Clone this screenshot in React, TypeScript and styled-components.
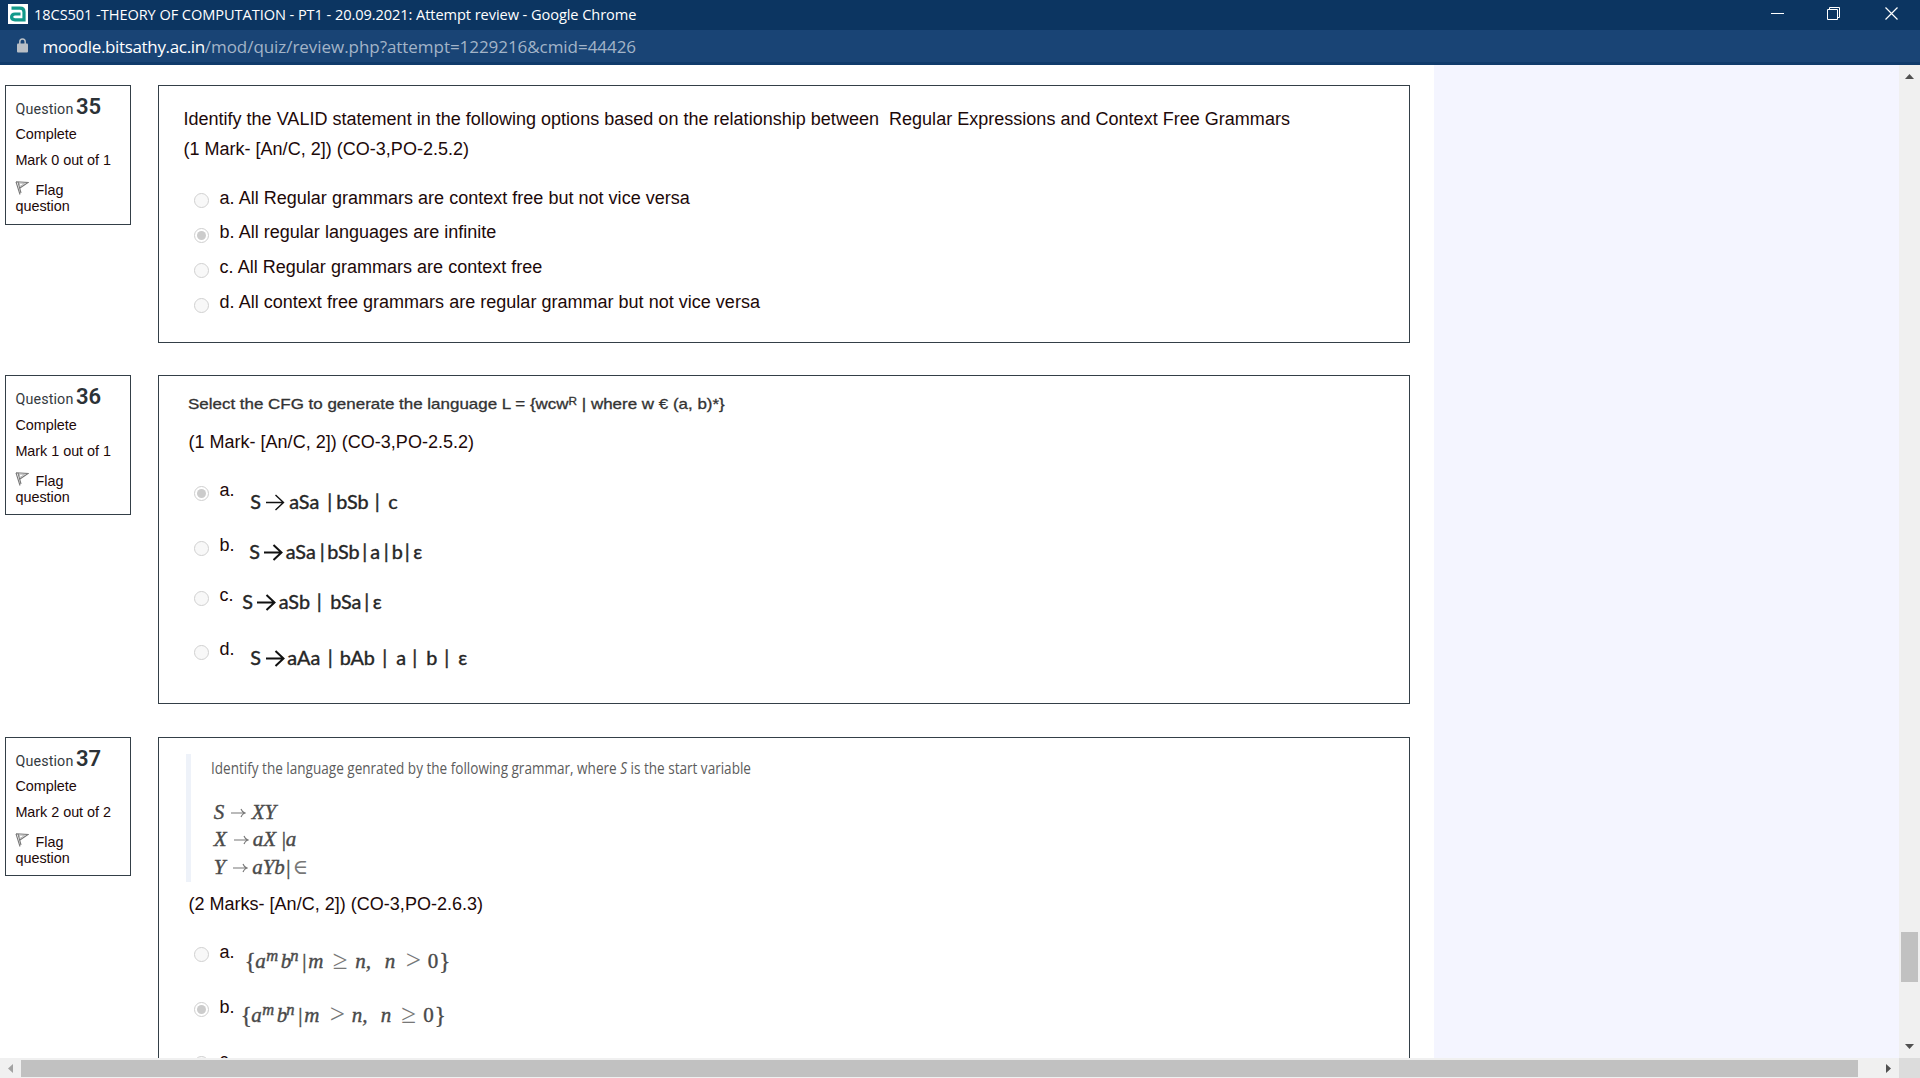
import React from "react";
import styled, { createGlobalStyle } from "styled-components";

const Global = createGlobalStyle`
  * { box-sizing: border-box; }
  html, body { margin: 0; padding: 0; overflow: hidden; background: #fff; }
  body { font-family: "Liberation Sans", Arial, sans-serif; }
`;

const SANS = '"Liberation Sans", Arial, sans-serif';
const UI = '"Open Sans", "Noto Sans", sans-serif';

const Window = styled.div`
  width: 1920px;
  height: 1078px;
  display: flex;
  flex-direction: column;
  overflow: hidden;
`;

const TitleBar = styled.header`
  height: 30px;
  flex: none;
  display: flex;
  align-items: center;
  padding: 0 22px 2px 8px;
  background: #0c3561;
  color: #fff;
  font: 14.6px/28px ${UI};
`;

const Title = styled.span`
  margin-left: 6px;
  white-space: pre;
  letter-spacing: -0.075px;
`;

const Controls = styled.div`
  margin-left: auto;
  display: flex;
  gap: 43px;
  padding-bottom: 1px;
  svg { display: block; }
  svg:last-child { margin-left: 2px; }
`;

const AddressBar = styled.div`
  height: 35px;
  flex: none;
  display: flex;
  align-items: center;
  padding: 0 0 1px 16px;
  background: #194475;
  border-bottom: 3px solid #103b6b;
  color: #a3b4c8;
  font: 17px/32px ${UI};
`;

const Url = styled.span`
  margin: 2px 0 0 13.5px;
  white-space: pre;
  letter-spacing: -0.05px;
  b { font-weight: 400; color: #fff; letter-spacing: -0.34px; }
`;

const Viewport = styled.div`
  height: 993px;
  flex: none;
  display: flex;
`;

const Content = styled.main`
  width: 1434px;
  height: 993px;
  overflow: hidden;
  padding: 20px 0 0 5px;
  background: #fff;
`;

const SidePanel = styled.aside`
  flex: 1;
  background: #f4f5ff;
`;

const VTrack = styled.div`
  width: 21px;
  display: flex;
  flex-direction: column;
  align-items: center;
  background: #f0f0f0;
  padding: 9px 0 9px;
  svg { display: block; flex: none; }
`;

const VThumb = styled.div`
  width: 17px;
  height: 50px;
  margin: 853px 0 auto;
  background: #c1c1c1;
`;

const HTrack = styled.div`
  height: 20px;
  flex: none;
  display: flex;
  background: #f0f0f0;
`;

const HArrow = styled.div<{ $end?: boolean }>`
  width: 21px;
  flex: none;
  margin-left: ${(p) => (p.$end ? "auto" : 0)};
  display: flex;
  align-items: center;
  justify-content: center;
`;

const HThumb = styled.div`
  width: 1837px;
  flex: none;
  height: 17px;
  margin-top: 2px;
  background: #c1c1c1;
`;

const Corner = styled.div`
  width: 21px;
  flex: none;
  background: #dcdcdc;
`;

const QuestionRow = styled.section<{ $h: number; $gap: number }>`
  display: flex;
  align-items: flex-start;
  height: ${(p) => p.$h}px;
  margin-bottom: ${(p) => p.$gap}px;
`;

const InfoBox = styled.div<{ $h: number }>`
  width: 126px;
  height: ${(p) => p.$h}px;
  flex: none;
  border: 1px solid #343f47;
  padding: 8px 0 0 9.4px;
  color: #1d0909;
  font: 14.4px/16px ${SANS};
`;

const InfoHead = styled.h3<{ $h: number }>`
  margin: 0;
  height: ${(p) => p.$h}px;
  font: 400 14.3px/25px Roboto, sans-serif;
  letter-spacing: 0.15px;
  word-spacing: -1.2px;
  color: #343a40;
  white-space: pre;
  b { font-size: 22px; font-weight: 600; letter-spacing: 0; color: #2c3237; }
`;

const InfoLine = styled.div`
  height: 26px;
  line-height: 26px;
  white-space: pre;
  letter-spacing: -0.03px;
`;

const FlagLabel = styled.div`
  margin-top: 8px;
  line-height: 16px;
  svg { margin-right: 6px; vertical-align: 0; }
`;

const Body = styled.div<{ $pt: number; $pl: number }>`
  width: 1252px;
  height: 100%;
  flex: none;
  margin-left: 27px;
  border: 1px solid #343f47;
  padding: ${(p) => p.$pt}px 0 0 ${(p) => p.$pl}px;
  color: #1d0909;
  font: 18px/30px ${SANS};
`;

const Para = styled.p<{ $mt?: number }>`
  margin: ${(p) => p.$mt || 0}px 0 0;
  height: 30px;
  white-space: pre;
  letter-spacing: 0.017px;
`;

const WideLine = styled.p`
  margin: 0;
  height: 20px;
  font: 14.4px/22px ${SANS};
  color: #333;
  -webkit-text-stroke: 0.3px #333;
  white-space: pre;
  width: max-content;
  transform-origin: 0 50%;
  transform: scaleX(1.178);
  sup { font-size: 10px; line-height: 0; vertical-align: 4px; }
`;

const Answers = styled.div<{ $mt: number; $ml: number }>`
  margin: ${(p) => p.$mt}px 0 0 ${(p) => p.$ml}px;
`;

const Answer = styled.div<{ $h: number }>`
  display: flex;
  align-items: flex-start;
  height: ${(p) => p.$h}px;
`;

const Radio = styled.span<{ $on?: boolean; $h: number }>`
  width: 15px;
  height: 15px;
  flex: none;
  margin: ${(p) => (p.$h - 15) / 2}px 10.6px 0 0.6px;
  border: 1px solid #cfcfcf;
  border-radius: 50%;
  background: ${(p) => (p.$on ? "#cccccc" : "#f8f8f8")};
  background-clip: content-box;
  padding: ${(p) => (p.$on ? 2 : 0)}px;
`;

const Label = styled.span<{ $lh: number; $w?: number }>`
  flex: none;
  width: ${(p) => (p.$w ? p.$w + "px" : "auto")};
  line-height: ${(p) => p.$lh}px;
  letter-spacing: 0.017px;
  white-space: pre;
`;

const Formula = styled.span<{ $lh: number; $math?: boolean }>`
  display: flex;
  flex: none;
  margin-left: 0.6px;
  line-height: ${(p) => p.$lh}px;
  white-space: pre;
  font-family: ${(p) => (p.$math ? '"Liberation Serif", "DejaVu Serif", serif' : 'Lato, "Liberation Sans", sans-serif')};
  font-size: ${(p) => (p.$math ? 21 : 19.8)}px;
  color: ${(p) => (p.$math ? "#4a4a4a" : "#262626")};
  -webkit-text-stroke: 0.3px currentColor;
`;

const Tok = styled.span<{ $w: number; $kind?: string }>`
  display: block;
  flex: none;
  width: ${(p) => p.$w}px;
  font-style: ${(p) => (p.$kind === "i" || p.$kind === "sup" ? "italic" : "normal")};
  font-size: ${(p) => (p.$kind === "sup" ? "16.5px" : p.$kind === "op" ? "27px" : p.$kind === "brace" ? "23px" : "inherit")};
  color: ${(p) => (p.$kind === "op" || p.$kind === "in" ? "#777" : "inherit")};
  -webkit-text-stroke-width: ${(p) => (p.$kind === "op" || p.$kind === "in" ? 0 : p.$kind === "sup" ? 0.45 : 0.4)}px;
  margin-top: ${(p) => (p.$kind === "sup" ? -6 : p.$kind === "op" ? -1 : 0)}px;
  svg { display: inline-block; vertical-align: 0; }
`;

const Quote = styled.blockquote`
  margin: 0 0 0 -2.4px;
  height: 128px;
  border-left: 5px solid #eef2f9;
  padding: 2px 0 0 19.5px;
`;

const QuoteHead = styled.p`
  margin: 0;
  height: 24px;
  font: 16.3px/24px ${UI};
  color: #5c5c5c;
  white-space: pre;
  width: max-content;
  transform-origin: 0 50%;
  transform: scaleX(0.832);
`;

const QuoteMath = styled.div`
  padding: 19px 0 0 2.6px;
`;

type T = [string, number, string?];

const BoldArrow = styled.svg`
  && { vertical-align: -2px; }
`;

const ArrowText = ({ thin }: { thin?: boolean }) => (
  <BoldArrow width="19" height="17" viewBox="0 0 19 17" fill="none" stroke="#111" strokeWidth={thin ? 1.4 : 2}>
    <path d="M0 8.5H17.5M9.5 1L17.5 8.5L9.5 16" />
  </BoldArrow>
);

const ArrowMath = () => (
  <svg width="15" height="12" viewBox="0 0 15 12" fill="none" stroke="#777" strokeWidth="1.1">
    <path d="M0 6H14M10 2Q11 5 14 6Q11 7 10 10" />
  </svg>
);

const Tokens = ({ items, lh, math }: { items: T[]; lh: number; math?: boolean }) => (
  <Formula $lh={lh} $math={math}>
    {items.map(([t, w, k], i) => (
      <Tok key={i} $w={w} $kind={k}>
        {t === "->" ? math ? <ArrowMath /> : <ArrowText thin={k === "thin"} /> : t}
      </Tok>
    ))}
  </Formula>
);

const Info = ({ n, mark, h, head = 27 }: { n: number; mark: string; h: number; head?: number }) => (
  <InfoBox $h={h}>
    <InfoHead $h={head}>Question <b>{n}</b></InfoHead>
    <InfoLine>Complete</InfoLine>
    <InfoLine>{mark}</InfoLine>
    <FlagLabel>
      <svg width="14" height="14" viewBox="0 0 14 14" fill="none" stroke="#777" strokeWidth="1.1">
        <path d="M1 .8L5 13.5M1 .8L13 1.5L4.2 7.5M3 .8L6 12" />
        <path d="M4 2L9.5 2.4L5 5.5Z" stroke="#aaa" strokeWidth=".8" />
      </svg>
      Flag<br />question
    </FlagLabel>
  </InfoBox>
);

const q35 = [
  { t: "a. All Regular grammars are context free but not vice versa", lh: 30 },
  { t: "b. All regular languages are infinite", on: true, lh: 28 },
  { t: "c. All Regular grammars are context free", lh: 28 },
  { t: "d. All context free grammars are regular grammar but not vice versa", lh: 28 },
];

type Choice = { l: string; on?: boolean; h: number; lh: number; w: number; flh: number; f: T[] };

const q36: Choice[] = [
  { l: "a.", on: true, h: 55, lh: 48, w: 30, flh: 71, f: [["S", 15.5], ["->", 23.5, "thin"], ["aSa", 38], ["|", 9], ["bSb", 38.5], ["|", 13.5], ["c", 12]] },
  { l: "b.", h: 55, lh: 48, w: 29, flh: 61, f: [["S", 15], ["->", 21.5], ["aSa", 34], ["|", 7.5], ["bSb", 35], ["|", 8], ["a", 13.5], ["|", 8], ["b", 13], ["|", 8.5], ["ε", 12]] },
  { l: "c.", h: 45, lh: 38, w: 22, flh: 51, f: [["S", 15], ["->", 21.5], ["aSb", 38], ["|", 13.5], ["bSa", 34], ["|", 8.5], ["ε", 12]] },
  { l: "d.", h: 63, lh: 56, w: 30, flh: 73, f: [["S", 15.5], ["->", 21.5], ["aAa", 40.5], ["|", 12], ["bAb", 42.5], ["|", 14], ["a", 16], ["|", 14], ["b", 18], ["|", 14], ["ε", 12]] },
];

const q37: Choice[] = [
  { l: "a.", h: 55, lh: 50, w: 24.5, flh: 69, f: [["{", 10.5, "brace"], ["a", 11, "i"], ["m", 14.5, "sup"], ["b", 9.5, "i"], ["n", 12, "sup"], ["|", 6], ["m", 24.5, "i"], ["≥", 22.5, "op"], ["n,", 29.5, "i"], ["n", 21, "i"], [">", 22, "op"], ["0", 11.5], ["}", 12, "brace"]] },
  { l: "b.", on: true, h: 55, lh: 50, w: 20.5, flh: 67, f: [["{", 10.5, "brace"], ["a", 11, "i"], ["m", 14.5, "sup"], ["b", 9.5, "i"], ["n", 12, "sup"], ["|", 6], ["m", 25.5, "i"], [">", 22, "op"], ["n,", 29, "i"], ["n", 20.5, "i"], ["≥", 22, "op"], ["0", 11.5], ["}", 12, "brace"]] },
  { l: "c.", h: 53, lh: 46, w: 21, flh: 68, f: [] },
];

const Choices = ({ list, math }: { list: Choice[]; math?: boolean }) => (
  <>
    {list.map((c) => (
      <Answer key={c.l} $h={c.h}>
        <Radio $on={c.on} $h={c.h} />
        <Label $lh={c.lh} $w={c.w}>{c.l}</Label>
        {c.f.length > 0 && <Tokens items={c.f} lh={c.flh} math={math} />}
      </Answer>
    ))}
  </>
);

export default function App() {
  return (
    <Window>
      <Global />
      <TitleBar>
        <svg width="20" height="20" viewBox="0 0 20 20">
          <rect width="20" height="20" fill="#fff" />
          <path d="M3.5 4.2H12Q16 4.2 16 8V15.8H7Q3.6 15.8 3.6 13.1Q3.6 10 7 10H12.5" fill="none" stroke="#12998a" strokeWidth="3.2" />
        </svg>
        <Title>18CS501 -THEORY OF COMPUTATION - PT1 - 20.09.2021: Attempt review - Google Chrome</Title>
        <Controls>
          <svg width="13" height="13" stroke="#fff" fill="none"><path d="M0 6.5H13" /></svg>
          <svg width="13" height="13" stroke="#fff" fill="none"><path d="M.5 2.5H10.5V12.5H.5ZM2.5 2.5V.5H12.5V10.5H10.5" /></svg>
          <svg width="13" height="13" stroke="#fff" fill="none" strokeWidth="1.2"><path d="M.5 .5L12.5 12.5M12.5 .5L.5 12.5" /></svg>
        </Controls>
      </TitleBar>
      <AddressBar>
        <svg width="13" height="15" viewBox="0 0 13 15">
          <rect x="1" y="5.5" width="11" height="9" rx="1" fill="#b9bfc6" />
          <path d="M3.8 6V3.8Q3.8 1 6.5 1Q9.2 1 9.2 3.8V6" fill="none" stroke="#b9bfc6" strokeWidth="1.5" />
        </svg>
        <Url><b>moodle.bitsathy.ac.in</b>/mod/quiz/review.php?attempt=1229216&amp;cmid=44426</Url>
      </AddressBar>
      <Viewport>
        <Content>
          <QuestionRow $h={258} $gap={32}>
            <Info n={35} mark="Mark 0 out of 1" h={140} />
            <Body $pt={18} $pl={24.4}>
              <Para>Identify the VALID statement in the following options based on the relationship between  Regular Expressions and Context Free Grammars</Para>
              <Para>(1 Mark- [An/C, 2]) (CO-3,PO-2.5.2)</Para>
              <Answers $mt={19} $ml={10}>
                {q35.map((a) => (
                  <Answer key={a.t} $h={35}>
                    <Radio $on={a.on} $h={35} />
                    <Label $lh={a.lh}>{a.t}</Label>
                  </Answer>
                ))}
              </Answers>
            </Body>
          </QuestionRow>
          <QuestionRow $h={329} $gap={33}>
            <Info n={36} mark="Mark 1 out of 1" h={140} head={28} />
            <Body $pt={17} $pl={29.4}>
              <WideLine>Select the CFG to generate the language L = {"{"}wcw<sup>R</sup> | where w € (a, b)*{"}"}</WideLine>
              <Para $mt={14}>(1 Mark- [An/C, 2]) (CO-3,PO-2.5.2)</Para>
              <Answers $mt={9} $ml={5}><Choices list={q36} /></Answers>
            </Body>
          </QuestionRow>
          <QuestionRow $h={400} $gap={0}>
            <Info n={37} mark="Mark 2 out of 2" h={139} />
            <Body $pt={16} $pl={29.4}>
              <Quote>
                <QuoteHead>Identify the language genrated by the following grammar, where <i>S</i> is the start variable</QuoteHead>
                <QuoteMath>
                  <Tokens math lh={27} items={[["S", 17, "i"], ["->", 21], ["XY", 30, "i"]]} />
                  <Tokens math lh={27} items={[["X", 20, "i"], ["->", 19], ["aX", 29, "i"], ["|", 4], ["a", 10, "i"]]} />
                  <Tokens math lh={29} items={[["Y", 19, "i"], ["->", 19.5], ["aYb", 34, "i"], ["|", 6.5], ["∈", 10, "in"]]} />
                </QuoteMath>
              </Quote>
              <Para $mt={7}>(2 Marks- [An/C, 2]) (CO-3,PO-2.6.3)</Para>
              <Answers $mt={8} $ml={5}><Choices list={q37} math /></Answers>
            </Body>
          </QuestionRow>
        </Content>
        <SidePanel />
        <VTrack>
          <svg width="9" height="5"><path d="M0 5L4.5 0L9 5Z" fill="#505050" /></svg>
          <VThumb />
          <svg width="9" height="5"><path d="M0 0L4.5 5L9 0Z" fill="#505050" /></svg>
        </VTrack>
      </Viewport>
      <HTrack>
        <HArrow><svg width="5" height="9"><path d="M5 0L0 4.5L5 9Z" fill="#a3a3a3" /></svg></HArrow>
        <HThumb />
        <HArrow $end><svg width="5" height="9"><path d="M0 0L5 4.5L0 9Z" fill="#505050" /></svg></HArrow>
        <Corner />
      </HTrack>
    </Window>
  );
}
